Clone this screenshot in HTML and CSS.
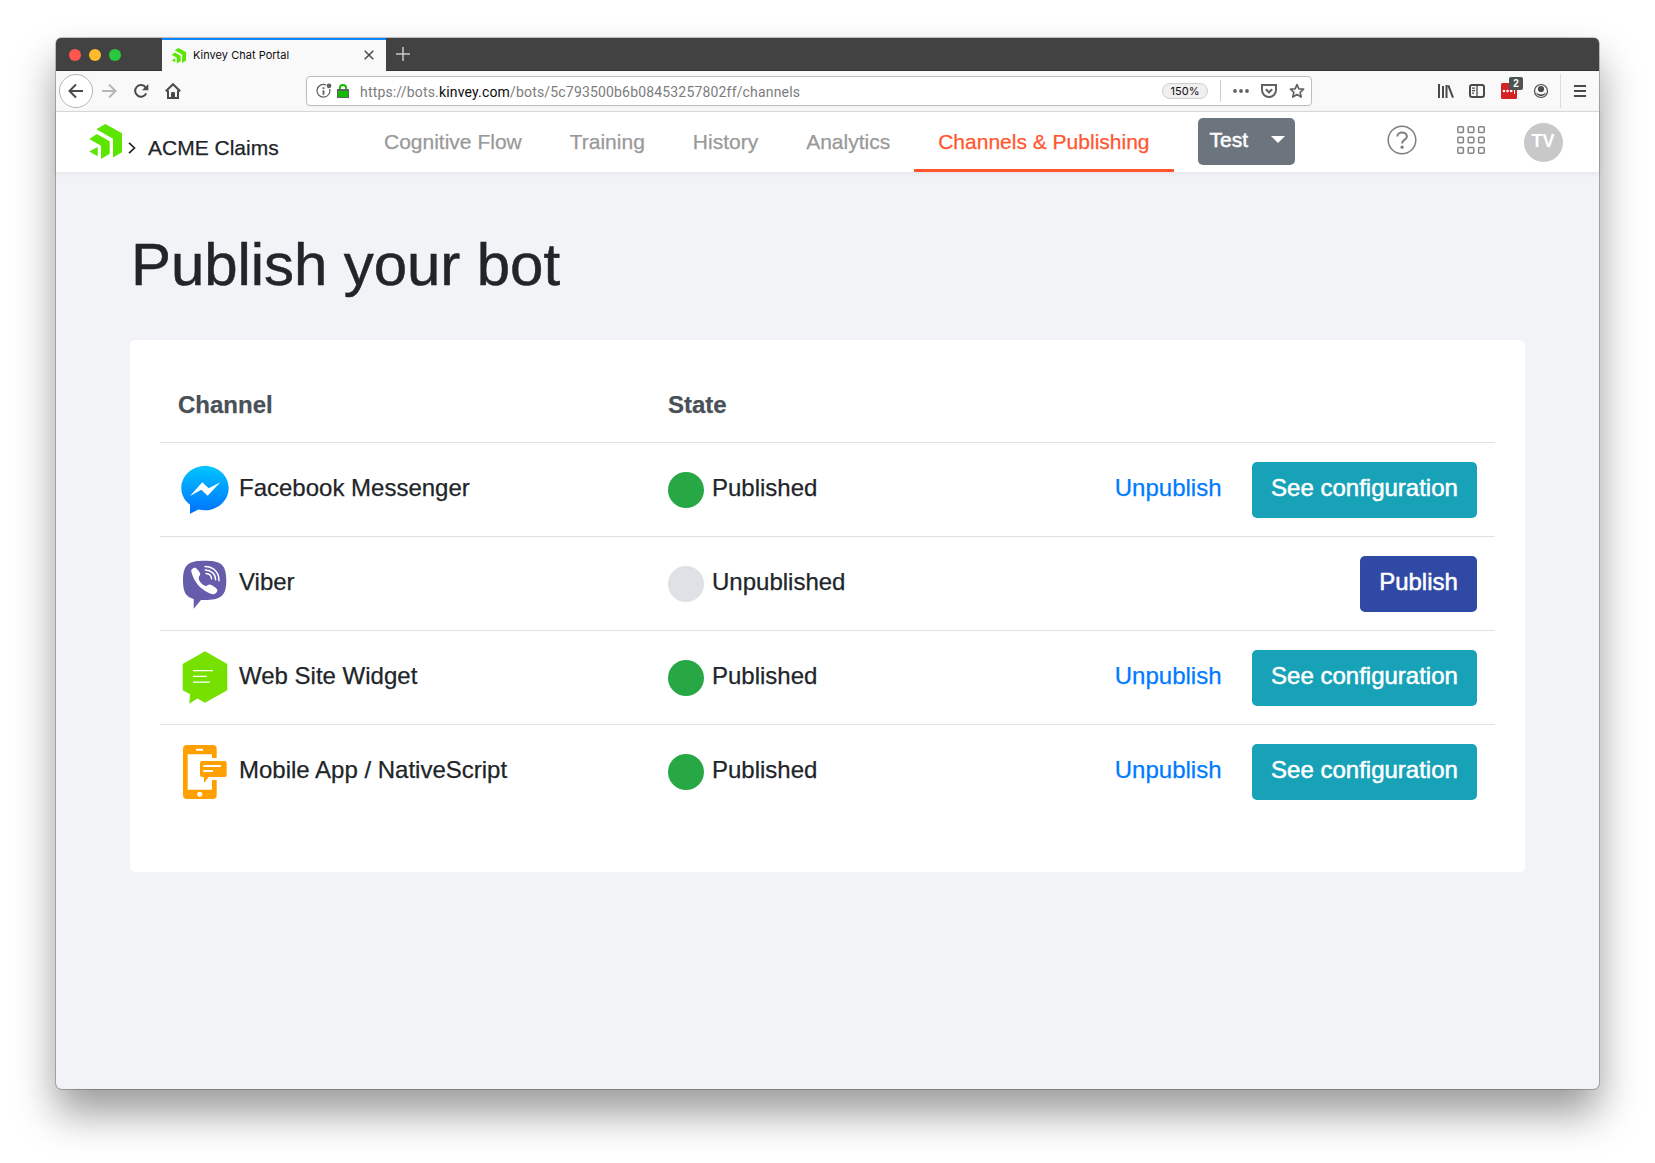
FILE: index.html
```html
<!DOCTYPE html>
<html lang="en">
<head>
<meta charset="utf-8">
<title>Kinvey Chat Portal</title>
<link rel="stylesheet" href="styles.css">
</head>
<body>
<svg class="defs" width="0" height="0" aria-hidden="true">
  <symbol id="logo" viewBox="0 0 34 36">
    <path d="M7.3 5.3 16.3 0 33 9.3V28.3L24 33.5V14.7Z"/>
    <path d="M.3 15 7.7 10 20.7 17.3V29.8L12 35V21.7Z"/>
    <path d="M.3 27.5 8.7 23V32.3Z"/>
  </symbol>
</svg>
<div class="window">
  <div class="tabbar">
    <div class="lights"><i class="red"></i><i class="yellow"></i><i class="green"></i></div>
    <div class="tab">
      <svg class="tab-logo" width="16" height="16"><use href="#logo"/></svg>
      <span class="tab-title">Kinvey Chat Portal</span>
      <svg class="tab-close" width="10" height="10" viewBox="0 0 10 10"><path d="M.7.7 9.3 9.3M9.3.7.7 9.3"/></svg>
    </div>
    <svg class="tab-new" width="14" height="14" viewBox="0 0 14 14"><path d="M7 0V14M0 7H14"/></svg>
  </div>

  <div class="toolbar">
    <div class="back"><svg width="16" height="16" viewBox="0 0 16 16"><path d="M15 8H1.5M8 1.5 1.5 8 8 14.5"/></svg></div>
    <svg class="forward" width="16" height="16" viewBox="0 0 16 16"><path d="M1 8H14.5M8 1.5 14.5 8 8 14.5"/></svg>
    <svg class="reload" width="16" height="16" viewBox="0 0 16 16"><path d="M13.2 10.3A5.8 5.8 0 1 1 12.6 4.4"/><path class="fill" d="M15.3 1V7.3H9Z"/></svg>
    <svg class="home" width="16" height="16" viewBox="0 0 16 16"><path d="M.8 8.3 8 1.2 15.2 8.3M3 7.5V15H13V7.5"/><path class="fill" d="M6 15V10.2Q6 9 7 9H9Q10 9 10 10.2V15Z"/></svg>
    <div class="urlbar">
      <svg class="info" width="16" height="16" viewBox="0 0 16 16"><path d="M10 1.9A6.4 6.4 0 1 0 13.6 6"/><path class="bar" d="M7.5 7.2V11.8M7.5 4.2V5.9"/><circle cx="13" cy="2.8" r="2.4"/></svg>
      <svg class="lock" width="12" height="14" viewBox="0 0 12 14"><path d="M2.9 7V4.2a3.1 3.1 0 0 1 6.2 0V7" fill="none" stroke="#12bc00" stroke-width="2"/><rect y="6" width="12" height="8" rx="1.2" fill="#12bc00"/></svg>
      <span class="url">https://bots.<b>kinvey.com</b>/bots/5c793500b6b08453257802ff/channels</span>
      <span class="zoom">150%</span>
      <span class="url-divider"></span>
      <svg class="dots" width="16" height="4" viewBox="0 0 16 4"><circle cx="2" cy="2" r="1.9"/><circle cx="8" cy="2" r="1.9"/><circle cx="14" cy="2" r="1.9"/></svg>
      <svg class="pocket" width="16" height="14" viewBox="0 0 16 14"><path d="M1 1H15V6A7 7 0 0 1 1 6Z"/><path d="M4.8 5.2 8 8.3 11.2 5.2"/></svg>
      <svg class="star" width="16" height="16" viewBox="0 0 16 16"><path d="M8 1.6 9.9 5.8 14.6 6.2 11.1 9.3 12.2 14 8 11.5 3.8 14 4.9 9.3 1.4 6.2 6.1 5.8Z"/></svg>
    </div>
    <svg class="library" width="16" height="14" viewBox="0 0 16 14"><path d="M1 0V14M5 2V14M8.5 1V14M10.3 1.3 15 13.6"/></svg>
    <svg class="sidebar" width="16" height="14" viewBox="0 0 16 14"><rect x="1" y="1" width="14" height="12" rx="2"/><path class="thin" d="M8 1V13M3 4.2H6M3 6.7H6M3 9.2H5"/></svg>
    <div class="addon">
      <svg width="16" height="16" viewBox="0 0 16 16"><rect width="16" height="16" rx="1.5" fill="#d32323"/><g fill="#fff"><circle cx="3" cy="8" r="1.3"/><circle cx="6.6" cy="8" r="1.3"/><circle cx="10.2" cy="8" r="1.3"/><rect x="13" y="6" width="1" height="5"/></g></svg>
      <span class="badge">2</span>
    </div>
    <svg class="account" width="16" height="16" viewBox="0 0 16 16"><circle class="ring" cx="8" cy="8" r="6.5"/><circle cx="8" cy="6" r="3.1"/><path d="M3.2 9.6Q5.5 11.6 8 11.6T12.8 9.6Q12 13 8 13.2 4 13 3.2 9.6Z"/></svg>
    <span class="bar-divider"></span>
    <svg class="menu" width="12" height="12" viewBox="0 0 12 12"><path d="M0 1H12M0 6H12M0 11H12"/></svg>
  </div>

  <header class="header">
    <svg class="logo" width="34" height="36"><use href="#logo"/></svg>
    <svg class="chevron" width="8" height="12" viewBox="0 0 8 12"><path d="M1 .8 6.5 6 1 11.2"/></svg>
    <span class="app-name">ACME Claims</span>
    <nav class="nav">
      <a>Cognitive Flow</a><a>Training</a><a>History</a><a>Analytics</a><a class="active">Channels &amp; Publishing</a>
    </nav>
    <button class="test">Test<i class="caret"></i></button>
    <svg class="help" width="30" height="30" viewBox="0 0 30 30"><circle cx="15" cy="15" r="13.8"/><path d="M10.3 11.6C10.3 6.2 19.9 6.2 19.9 11.4 19.9 14.7 15.1 14.6 15.1 18.6"/><circle class="dot" cx="15.1" cy="22.2" r="1.6"/></svg>
    <svg class="apps" width="28" height="28" viewBox="0 0 28 28"><g id="r"><rect x=".8" y=".8" width="5.6" height="5.6" rx="1"/><rect x="11.2" y=".8" width="5.6" height="5.6" rx="1"/><rect x="21.6" y=".8" width="5.6" height="5.6" rx="1"/></g><use href="#r" y="10.4"/><use href="#r" y="20.8"/></svg>
    <span class="avatar">TV</span>
  </header>

  <main class="main">
    <h1>Publish your bot</h1>
    <section class="card">
      <div class="row head"><span>Channel</span><span>State</span></div>

      <div class="row">
        <div class="channel">
          <svg width="54" height="60" viewBox="0 0 54 60">
            <linearGradient id="mg" x1="0" y1="0" x2="0" y2="1"><stop offset="0" stop-color="#00c6ff"/><stop offset="1" stop-color="#0070ff"/></linearGradient>
            <path fill="url(#mg)" d="M27 6C40.2 6 50.7 15.7 50.7 28.1S40.2 50.3 27 50.3Q23.5 50.3 20.5 49.5L12 53.7V44.8C6.500 40.700 3.300 34.900 3.300 28.100 3.300 15.700 13.800 6 27 6Z"/>
            <path fill="#fff" d="M12 36 24.300 22.300 30.700 28.300 42.300 22.300 29.700 35.700 23.300 29.700Z"/>
          </svg><span>Facebook Messenger</span>
        </div>
        <div class="state"><i class="on"></i><span>Published</span></div>
        <div class="actions"><button class="link">Unpublish</button><button class="info-btn">See configuration</button></div>
      </div>

      <div class="row">
        <div class="channel">
          <svg width="54" height="60" viewBox="0 0 54 60">
            <path fill="#665cac" d="M26.700 6.700C42 6.700 48.300 9.500 48.300 26.300 48.300 43 42 46 26.700 46L23 46 15.700 54.700V45C8 43 5 38.500 5 26.300 5 9.500 11.500 6.700 26.700 6.700Z"/>
            <path fill="#fff" d="M13.300 17.500C12.700 15.200 16 13.200 17.600 13.900 19.500 14.800 21.300 17.600 22.200 19.500 22.900 21 20.500 22.500 20.600 23.900 21 27.500 24.500 31 27.700 31.900 29.200 32.200 30.300 29.900 32 30.500 34.500 31.400 37.500 33.500 39.100 35.200 40.300 37 37.500 40.300 35 40.300 32 40 25.500 36.500 21.500 32.500 17.500 28.500 14.300 22 13.300 17.500Z"/>
            <path fill="none" stroke="#fff" stroke-width="1.500" stroke-linecap="round" d="M27 12.500C35 12.500 41 18 41 26.700M27.300 16C33.200 16.200 37.500 20 37.600 25.700M28 19.600C31.200 19.800 33.400 21.600 33.500 24.700"/>
          </svg><span>Viber</span>
        </div>
        <div class="state"><i class="off"></i><span>Unpublished</span></div>
        <div class="actions"><button class="primary">Publish</button></div>
      </div>

      <div class="row">
        <div class="channel">
          <svg width="54" height="60" viewBox="0 0 54 60">
            <path fill="#76e000" d="M27 3.300 49.300 15.900V42.300L27 54.800 19.300 50.500 11.300 55.800 12 46.200 4.700 42.300V15.900Z"/>
            <path stroke="#fff" stroke-width="1.300" d="M15 22.700H35M15 28.400H28.700M15 34.100H32"/>
          </svg><span>Web Site Widget</span>
        </div>
        <div class="state"><i class="on"></i><span>Published</span></div>
        <div class="actions"><button class="link">Unpublish</button><button class="info-btn">See configuration</button></div>
      </div>

      <div class="row">
        <div class="channel">
          <svg width="54" height="60" viewBox="0 0 54 60">
            <path fill="#ff9f00" d="M9 3H34.700Q38.700 3 38.700 7V16H34V12.300H9.700V47.700H34V38H38.700V53Q38.700 57 34.700 57H9Q5 57 5 53V7Q5 3 9 3Z"/>
            <path fill="#ff9f00" d="M24 19H46.700Q48.700 19 48.700 21V33Q48.700 35 46.700 35H30.700L26 41V35H24Q22 35 22 33V21Q22 19 24 19Z"/>
            <path stroke="#fff" stroke-width="2" d="M18 7.700H25M25.300 24H43M25.300 29H35"/>
            <circle cx="21.700" cy="52.300" r="2.500" fill="#fff"/>
          </svg><span>Mobile App / NativeScript</span>
        </div>
        <div class="state"><i class="on"></i><span>Published</span></div>
        <div class="actions"><button class="link">Unpublish</button><button class="info-btn">See configuration</button></div>
      </div>
    </section>
  </main>
</div>
</body>
</html>
```
FILE: styles.css
```css
* { box-sizing: border-box; }
body { margin: 0; height: 1163px; padding: 38px 56px 74px; background: #fff; font-family: "Liberation Sans", Arial, sans-serif; color: #212529; overflow: hidden; }
svg { display: block; flex: none; fill: none; }
.defs { position: absolute; }
button { font: inherit; border: 0; background: none; margin: 0; }

.window { height: 1051px; border-radius: 6px; background: #f1f3f7; display: flex; flex-direction: column; box-shadow: 0 0 0 1px rgba(0,0,0,.22), 0 24px 42px rgba(0,0,0,.4); }

.tabbar { height: 33px; flex: none; display: flex; align-items: center; background: #424242; border-radius: 5px 5px 0 0; border-bottom: 1px solid #323232; }
.lights { width: 106px; padding: 1px 0 0 13px; display: flex; gap: 8px; }
.lights i { width: 12px; height: 12px; border-radius: 50%; }
.red { background: #ff5750; }
.yellow { background: #ffbb2e; }
.green { background: #28c93f; }
.tab { width: 224px; height: 33px; align-self: flex-start; display: flex; align-items: center; padding: 0 12px 0 9px; background: #f9f9fa; border-top: 2px solid #0a84ff; }
.tab-logo { fill: #5ce500; }
.tab-title { margin-left: 6px; padding-bottom: 2px; flex: 1; font: 11px Inter, sans-serif; letter-spacing: .02px; color: #0c0c0d; white-space: nowrap; }
.tab-close { stroke: #4a4a4a; stroke-width: 1.5; margin-bottom: 1px; }
.tab-new { margin-left: 10px; stroke: #c8c8c8; stroke-width: 1.5; }

.toolbar { height: 41px; flex: none; display: flex; align-items: center; background: #f9f9fa; border-bottom: 1px solid #dcdcdc; stroke: #4a4a4b; stroke-width: 2; }
.toolbar .fill { fill: #4a4a4b; stroke: none; }
.back { width: 34px; height: 34px; margin-left: 3px; border: 1px solid #b6b6b6; border-radius: 50%; background: #fff; display: grid; place-items: center; }
.forward { margin-left: 8px; stroke: #b6b6b7; }
.reload { margin-left: 16px; }
.home { margin-left: 16px; }
.urlbar { width: 1006px; height: 30px; margin-left: 125px; border: 1px solid #bdbdbd; border-radius: 4px; background: #fff; display: flex; align-items: center; padding-left: 9px; stroke: #626262; box-shadow: 0 1px 2px rgba(0,0,0,.04); }
.info { stroke-width: 1.2; }
.info circle { fill: #626262; stroke: none; }
.info .bar { stroke-width: 1.8; }
.lock { margin-left: 5px; }
.url { width: 440px; margin: 2px 0 0 11px; font: 14px Roboto, sans-serif; letter-spacing: .17px; color: #7c7c7d; white-space: nowrap; }
.url b { font-weight: 400; color: #0c0c0d; }
.zoom { width: 46px; height: 16px; margin-left: 362px; border: 1px solid #cfcfcf; border-radius: 8px; background: #f0f0f0; font: 11px/14px Inter, sans-serif; text-align: center; color: #0c0c0d; }
.url-divider { width: 1px; height: 22px; margin-left: 12px; background: #cfcfcf; }
.dots { margin-left: 12px; fill: #626262; stroke: none; }
.pocket { margin-left: 12px; }
.star { margin-left: 12px; stroke-width: 1.7; stroke-linejoin: round; }
.library { margin-left: 126px; }
.sidebar { margin-left: 15px; }
.sidebar .thin { stroke-width: 1.3; }
.addon { position: relative; margin-left: 16px; stroke: none; }
.badge { position: absolute; left: 8px; top: -6px; width: 14px; height: 13px; border-radius: 2px; background: #4d5353; color: #fff; font: bold 10px/13px "Liberation Sans", Arial, sans-serif; text-align: center; }
.account { margin-left: 16px; fill: #4a4a4b; stroke: none; }
.account .ring { fill: none; stroke: #4a4a4b; stroke-width: 1.2; }
.bar-divider { width: 1px; height: 34px; margin-left: 11px; background: #dcdcdc; }
.menu { margin-left: 13px; }

.header { height: 60px; flex: none; display: flex; align-items: flex-start; background: #fff; padding-left: 33px; box-shadow: 0 1px 6px rgba(0,0,0,.07); font-size: 21px; -webkit-text-stroke: .25px; }
.logo { margin-top: 12px; fill: #5ce500; }
.chevron { margin: 30px 0 0 5px; stroke: #212529; stroke-width: 1.7; }
.app-name { width: 212px; margin-left: 12px; line-height: 60px; padding-top: 6px; white-space: nowrap; }
.nav { display: flex; white-space: nowrap; }
.nav a { height: 60px; line-height: 60px; padding: 0 24px; color: #999; border-bottom: 3px solid transparent; }
.nav .active { color: #ff5630; border-color: #ff5630; }
.test { width: 97px; height: 47px; margin: 6px 0 0 24px; border-radius: 5px; background: #6c757d; color: #fff; display: flex; align-items: center; justify-content: space-between; padding: 0 10px 4px 12px; -webkit-text-stroke: .5px #fff; }
.caret { border: 7px solid transparent; border-top-color: #fff; border-bottom: 0; margin-top: -1px; }
.help { margin: 13px 0 0 92px; stroke: #7f7f7f; stroke-width: 1.5; }
.help path { stroke-width: 2; }
.help .dot { fill: #7f7f7f; stroke: none; }
.apps { margin: 14px 0 0 40px; stroke: #858585; stroke-width: 1.5; }
.avatar { width: 39px; height: 39px; margin: 11px 0 0 39px; border-radius: 50%; background: #c8c8c8; color: #fff; font: bold 18px/37px "Liberation Sans", Arial, sans-serif; text-align: center; -webkit-text-stroke: 0; }

.main { padding: 57px 74px 0; }
h1 { margin: 0 0 0 1px; font-size: 60px; font-weight: 400; line-height: 72px; letter-spacing: -.08px; -webkit-text-stroke: .5px; }
.card { height: 532px; margin-top: 39px; padding: 30px; border-radius: 5px; background: #fff; font-size: 24px; line-height: 36px; white-space: nowrap; -webkit-text-stroke: .25px; }
.row { height: 94px; display: grid; grid-template-columns: 490px 1fr auto; align-items: center; border-top: 1px solid #dee2e6; padding: 1px 18px 0; }
.head { height: 72px; padding: 0 18px 2px; border: 0; font-weight: 700; color: #495057; }
.channel, .state, .actions { display: flex; align-items: center; }
.channel span, .state span { padding-bottom: 4px; }
.channel span { margin-left: 7px; }
.state i { width: 36px; height: 36px; border-radius: 50%; margin-right: 8px; }
.on { background: #28a745; }
.off { background: #dee2e6; }
.actions button { height: 56px; padding: 0 19px 4px; border-radius: 5px; color: #fff; -webkit-text-stroke: .5px #fff; }
.actions .link { color: #007bff; -webkit-text-stroke: .25px #007bff; margin-right: 11.500px; }
.actions .info-btn { width: 225px; background: #17a2b8; }
.actions .primary { width: 117px; background: #3049a5; }
```
